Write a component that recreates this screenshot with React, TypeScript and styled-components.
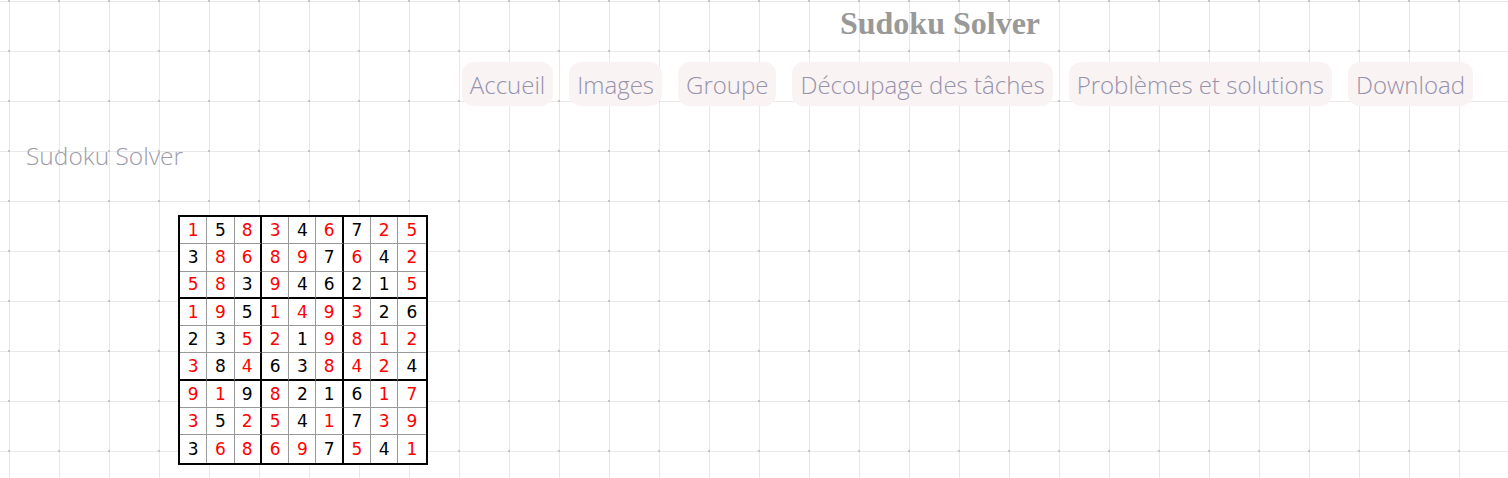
import styled, { createGlobalStyle } from "styled-components";

const GlobalStyle = createGlobalStyle`
  html, body {
    margin: 0;
    padding: 0;
  }
  body {
    min-height: 100vh;
    background-color: #ffffff;
    background-image:
      radial-gradient(circle, #c4c4c4 1px, transparent 1.6px),
      linear-gradient(to right, #e8e8e8 1px, transparent 1px),
      linear-gradient(to bottom, #e8e8e8 1px, transparent 1px);
    background-size: 50px 50px;
    background-position: -16px -24px, 9px 1px, 9px 1px;
  }
`;

const Page = styled.div`
  display: flex;
  flex-direction: column;
`;

const Title = styled.h1`
  margin: 0;
  padding: 3px 0 0 372px;
  text-align: center;
  font-family: "Liberation Serif", "Times New Roman", serif;
  font-weight: bold;
  font-size: 32px;
  line-height: 40px;
  color: #999999;
`;

const Nav = styled.nav`
  display: flex;
  justify-content: flex-end;
  gap: 16px;
  padding: 19px 35px 0 0;
`;

const NavLink = styled.a`
  display: block;
  height: 44px;
  padding: 0 8px;
  border-radius: 12px;
  background: #f9f3f3;
  font-family: "Open Sans", "Inter", sans-serif;
  font-weight: 300;
  font-size: 24px;
  line-height: 46px;
  color: #9592ab;
  text-decoration: none;
  white-space: nowrap;
`;

const SubTitle = styled.h2`
  margin: 34px 0 0 26px;
  font-family: "Open Sans", "Inter", sans-serif;
  font-weight: 300;
  font-size: 24.5px;
  line-height: 32px;
  color: #9d9ba6;
`;

const Board = styled.div`
  margin: 43px 0 0 178px;
  display: grid;
  grid-template-columns: repeat(9, 27.3px);
  grid-auto-rows: 27.3px;
  width: max-content;
  border: 2px solid #000;
  background: #ffffff;
`;

const Cell = styled.div<{ $red: boolean; $col: number; $row: number }>`
  display: flex;
  align-items: center;
  justify-content: center;
  font-family: "DejaVu Sans", sans-serif;
  font-size: 17px;
  color: ${({ $red }) => ($red ? "#ff0000" : "#000000")};
  border-right: ${({ $col }) =>
    $col === 8 ? "none" : $col % 3 === 2 ? "2px solid #000" : "1px solid #999"};
  border-bottom: ${({ $row }) =>
    $row === 8 ? "none" : $row % 3 === 2 ? "2px solid #000" : "1px solid #999"};
`;

const rows = [
  { digits: "158346725", mask: "rbrrbrbrr" },
  { digits: "386897642", mask: "brrrrbrbr" },
  { digits: "583946215", mask: "rrbrbbbbr" },
  { digits: "195149326", mask: "rrbrrrrbb" },
  { digits: "235219812", mask: "bbrrbrrrr" },
  { digits: "384638424", mask: "rbrbbrrrb" },
  { digits: "919821617", mask: "rrbrbbbrr" },
  { digits: "352541739", mask: "rbrrbrbrr" },
  { digits: "368697541", mask: "brrrrbrbr" },
];

const links = [
  "Accueil",
  "Images",
  "Groupe",
  "Découpage des tâches",
  "Problèmes et solutions",
  "Download",
];

const App = () => {
  return (
    <Page>
      <GlobalStyle />
      <Title>Sudoku Solver</Title>
      <Nav>
        {links.map((l) => (
          <NavLink key={l} href="#">
            {l}
          </NavLink>
        ))}
      </Nav>
      <SubTitle>Sudoku Solver</SubTitle>
      <Board>
        {rows.map((r, ri) =>
          r.digits.split("").map((d, ci) => (
            <Cell key={`${ri}-${ci}`} $red={r.mask[ci] === "r"} $col={ci} $row={ri}>
              {d}
            </Cell>
          ))
        )}
      </Board>
    </Page>
  );
};

export default App;
